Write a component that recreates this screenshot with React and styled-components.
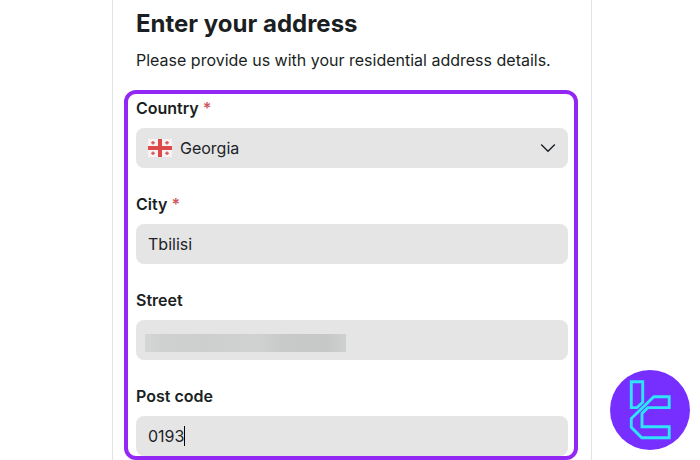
import React from "react";
import styled, { createGlobalStyle } from "styled-components";

const App = () => {
  return (
    <React.Fragment>
      <GlobalStyle />
      <Page>
        <Panel>
          <Title>Enter your address</Title>
          <Description>
            Please provide us with your residential address details.
          </Description>
          <Highlight>
            <Field>
              <Label>
                Country <Required>*</Required>
              </Label>
              <Control>
                <GeorgiaFlag />
                <Value>Georgia</Value>
                <Chevron />
              </Control>
            </Field>
            <Field>
              <Label>
                City <Required>*</Required>
              </Label>
              <Control>
                <Value>Tbilisi</Value>
              </Control>
            </Field>
            <Field>
              <Label>Street</Label>
              <Control $inset="9px">
                <Redacted />
              </Control>
            </Field>
            <Field>
              <Label>Post code</Label>
              <Control>
                <Value>0193</Value>
                <Caret />
              </Control>
            </Field>
          </Highlight>
        </Panel>
        <Badge>
          <Logo />
        </Badge>
      </Page>
    </React.Fragment>
  );
};

const GeorgiaFlag = () => (
  <FlagIcon viewBox="0 0 24 18">
    <rect width="24" height="18" fill="#f7f3f3" />
    <path d="M10 0h4v7H24v4H14V18h-4v-7H0V7h10z" fill="#dc4a4a" />
    <path
      d="M5 2v3.6M3.2 3.8h3.6M19 2v3.6M17.2 3.8h3.6M5 12.4V16M3.2 14.2h3.6M19 12.4V16M17.2 14.2h3.6"
      stroke="#d65454"
      strokeWidth="1.4"
    />
  </FlagIcon>
);

const Chevron = () => (
  <ChevronIcon viewBox="0 0 16 16">
    <path d="M1.2 4.6 8 11.3l6.8-6.7" fill="none" stroke="#1b1f23" strokeWidth="1.4" />
  </ChevronIcon>
);

const Logo = () => (
  <LogoIcon viewBox="0 0 80 80">
    <circle cx="40" cy="40" r="40" fill="#772fff" />
    <g fill="none" stroke="#2fe3fb" strokeWidth="2.9">
      <path d="M21.3 11.8h11.4v20.4l-5.6 5.4h-5.8z" />
      <path d="M43.8 26.8h15.4v10.8H37.8L32 43.4v13.3h27.2v11H31.8L21.3 57.3v-8.8z" />
    </g>
  </LogoIcon>
);

const GlobalStyle = createGlobalStyle`
  * {
    box-sizing: border-box;
  }
  body {
    margin: 0;
    background-color: #fff;
    color: #1b1f23;
    font-family: Inter, "Liberation Sans", sans-serif;
    font-size: 16px;
    line-height: 24px;
  }
`;
const Page = styled.div`
  display: flex;
  justify-content: space-between;
  align-items: flex-end;
  width: 700px;
  height: 460px;
  padding: 0 10px 0 112px;
  overflow: hidden;
`;
const Panel = styled.main`
  width: 480px;
  height: 460px;
  padding: 8px 23px 0;
  border: solid #e2e3e5;
  border-width: 0 1px;
`;
const Title = styled.h1`
  margin: 0;
  font-size: 24px;
  font-weight: 700;
  line-height: 32px;
`;
const Description = styled.p`
  margin: 8px 0 18px;
  white-space: nowrap;
`;
const Highlight = styled.section`
  display: flex;
  flex-direction: column;
  gap: 24px;
  height: 370px;
  margin: 0 -10px 0 -12px;
  padding: 2px 6px 0 8px;
  border: 4px solid #9328f4;
  border-radius: 12px;
`;
const Field = styled.div`
  display: flex;
  flex-direction: column;
  gap: 8px;
`;
const Label = styled.div`
  font-weight: 600;
`;
const Required = styled.span`
  color: #cc5a63;
`;
const Control = styled.div`
  display: flex;
  align-items: center;
  height: 40px;
  padding: 0 12px 0 ${(props) => props.$inset || "12px"};
  border-radius: 8px;
  background-color: #e5e5e5;
`;
const Value = styled.span`
  color: #202327;
`;
const FlagIcon = styled.svg`
  width: 24px;
  height: 18px;
  margin-right: 8px;
  border-radius: 1px;
`;
const ChevronIcon = styled.svg`
  width: 16px;
  height: 16px;
  margin-left: auto;
`;
const Redacted = styled.div`
  width: 201px;
  height: 18px;
  margin-top: 5px;
  background: linear-gradient(
    90deg,
    #d5d6d6 0%,
    #cfd1d1 8%,
    #cdcfcf 30%,
    #d0d1d1 56%,
    #c8c9c9 68%,
    #c6c7c7 90%,
    #cfd0d0 100%
  );
`;
const Caret = styled.span`
  width: 1px;
  height: 20px;
  background-color: #000;
`;
const Badge = styled.div`
  padding-bottom: 10px;
`;
const LogoIcon = styled.svg`
  display: block;
  width: 80px;
  height: 80px;
`;

export default App;
